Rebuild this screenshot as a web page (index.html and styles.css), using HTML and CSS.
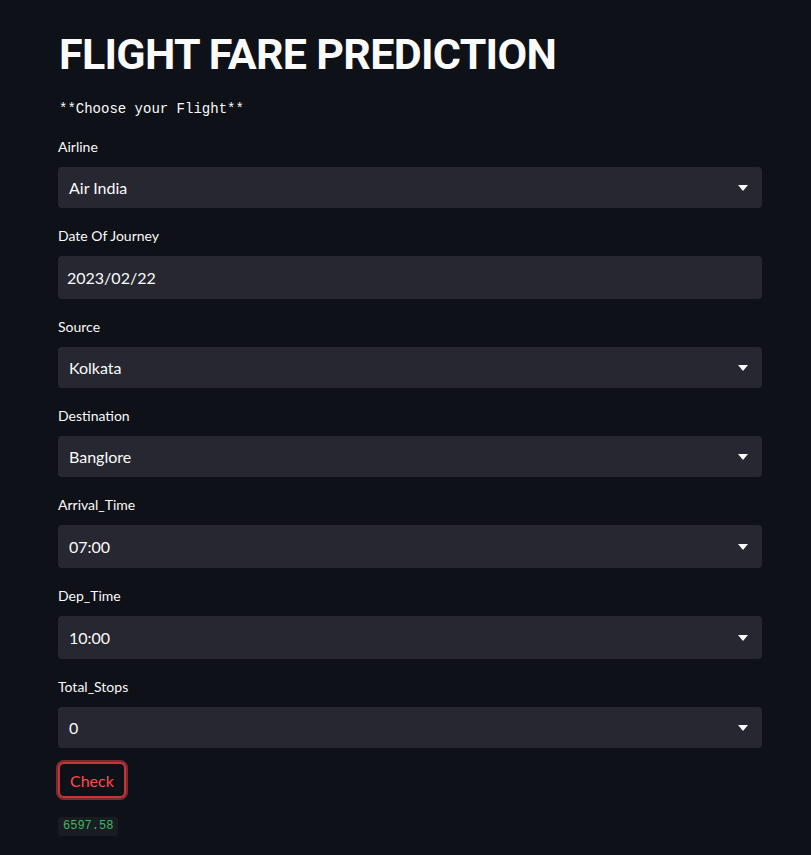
FILE: index.html
```html
<!DOCTYPE html>
<html>
<head>
<meta charset="utf-8">
<link rel="stylesheet" href="styles.css">
</head>
<body>
<main class="app">
  <h1 class="title">FLIGHT FARE PREDICTION</h1>
  <p class="mono-note">**Choose your Flight**</p>

  <div class="field">
    <label class="label">Airline</label>
    <div class="select"><span>Air India</span><svg class="caret" width="10" height="6" viewBox="0 0 10 6"><path d="M0 0H10L5 6Z" fill="#fafafa"/></svg></div>
  </div>

  <div class="field">
    <label class="label">Date Of Journey</label>
    <div class="input"><span>2023/02/22</span></div>
  </div>

  <div class="field">
    <label class="label">Source</label>
    <div class="select"><span>Kolkata</span><svg class="caret" width="10" height="6" viewBox="0 0 10 6"><path d="M0 0H10L5 6Z" fill="#fafafa"/></svg></div>
  </div>

  <div class="field">
    <label class="label">Destination</label>
    <div class="select"><span>Banglore</span><svg class="caret" width="10" height="6" viewBox="0 0 10 6"><path d="M0 0H10L5 6Z" fill="#fafafa"/></svg></div>
  </div>

  <div class="field">
    <label class="label">Arrival_Time</label>
    <div class="select tall"><span>07:00</span><svg class="caret" width="10" height="6" viewBox="0 0 10 6"><path d="M0 0H10L5 6Z" fill="#fafafa"/></svg></div>
  </div>

  <div class="field">
    <label class="label">Dep_Time</label>
    <div class="select tall"><span>10:00</span><svg class="caret" width="10" height="6" viewBox="0 0 10 6"><path d="M0 0H10L5 6Z" fill="#fafafa"/></svg></div>
  </div>

  <div class="field">
    <label class="label">Total_Stops</label>
    <div class="select"><span>0</span><svg class="caret" width="10" height="6" viewBox="0 0 10 6"><path d="M0 0H10L5 6Z" fill="#fafafa"/></svg></div>
  </div>

  <div class="btn-row"><button class="btn">Check</button></div>

  <div class="result"><code class="code">6597.58</code></div>
</main>
</body>
</html>
```

FILE: styles.css
```css
html, body {
  margin: 0;
  padding: 0;
  background: #0e1117;
}
body {
  font-family: "Lato", "Open Sans", sans-serif;
  color: #fafafa;
}
.app {
  width: 704px;
  margin: 0 0 0 58px;
  padding-top: 28px;
  display: flex;
  flex-direction: column;
}
.title {
  margin: 0;
  font-family: "Roboto", "Lato", sans-serif;
  font-size: 43px;
  font-weight: 700;
  line-height: 52px;
  letter-spacing: -0.7px;
  color: #fafafa;
  padding-left: 1px;
}
.mono-note {
  margin: 19px 0 0 1px;
  font-family: "Liberation Mono", "DejaVu Sans Mono", monospace;
  font-size: 14px;
  line-height: 20px;
  color: #fafafa;
}
.field {
  display: flex;
  flex-direction: column;
  margin-top: 18px;
}
.label {
  font-size: 14px;
  line-height: 20px;
  margin-bottom: 10px;
}
.select, .input {
  height: 41px;
  background: #262730;
  border-radius: 4px;
  display: flex;
  align-items: center;
  justify-content: space-between;
  padding: 0 14px 0 11px;
  font-size: 16px;
}
.input { height: 43px; padding-left: 9px; }
.select.tall { height: 43px; }
.caret { display: block; }
.btn-row {
  margin-top: 14px;
  display: flex;
}
.btn {
  font-family: inherit;
  font-size: 16px;
  color: #ff4b4b;
  background: #0e1117;
  border: 2px solid #c2373b;
  box-shadow: 0 0 0 2px rgba(255, 75, 75, 0.45);
  border-radius: 6px;
  height: 36px;
  padding: 0 10px;
  margin-left: 0;
}
.result {
  margin-top: 19px;
  display: flex;
}
.code {
  font-family: "Liberation Mono", "DejaVu Sans Mono", monospace;
  font-size: 12px;
  color: #3fb95d;
  background: #1a1c24;
  border-radius: 3px;
  padding: 2px 5px;
  line-height: 15px;
}
```
